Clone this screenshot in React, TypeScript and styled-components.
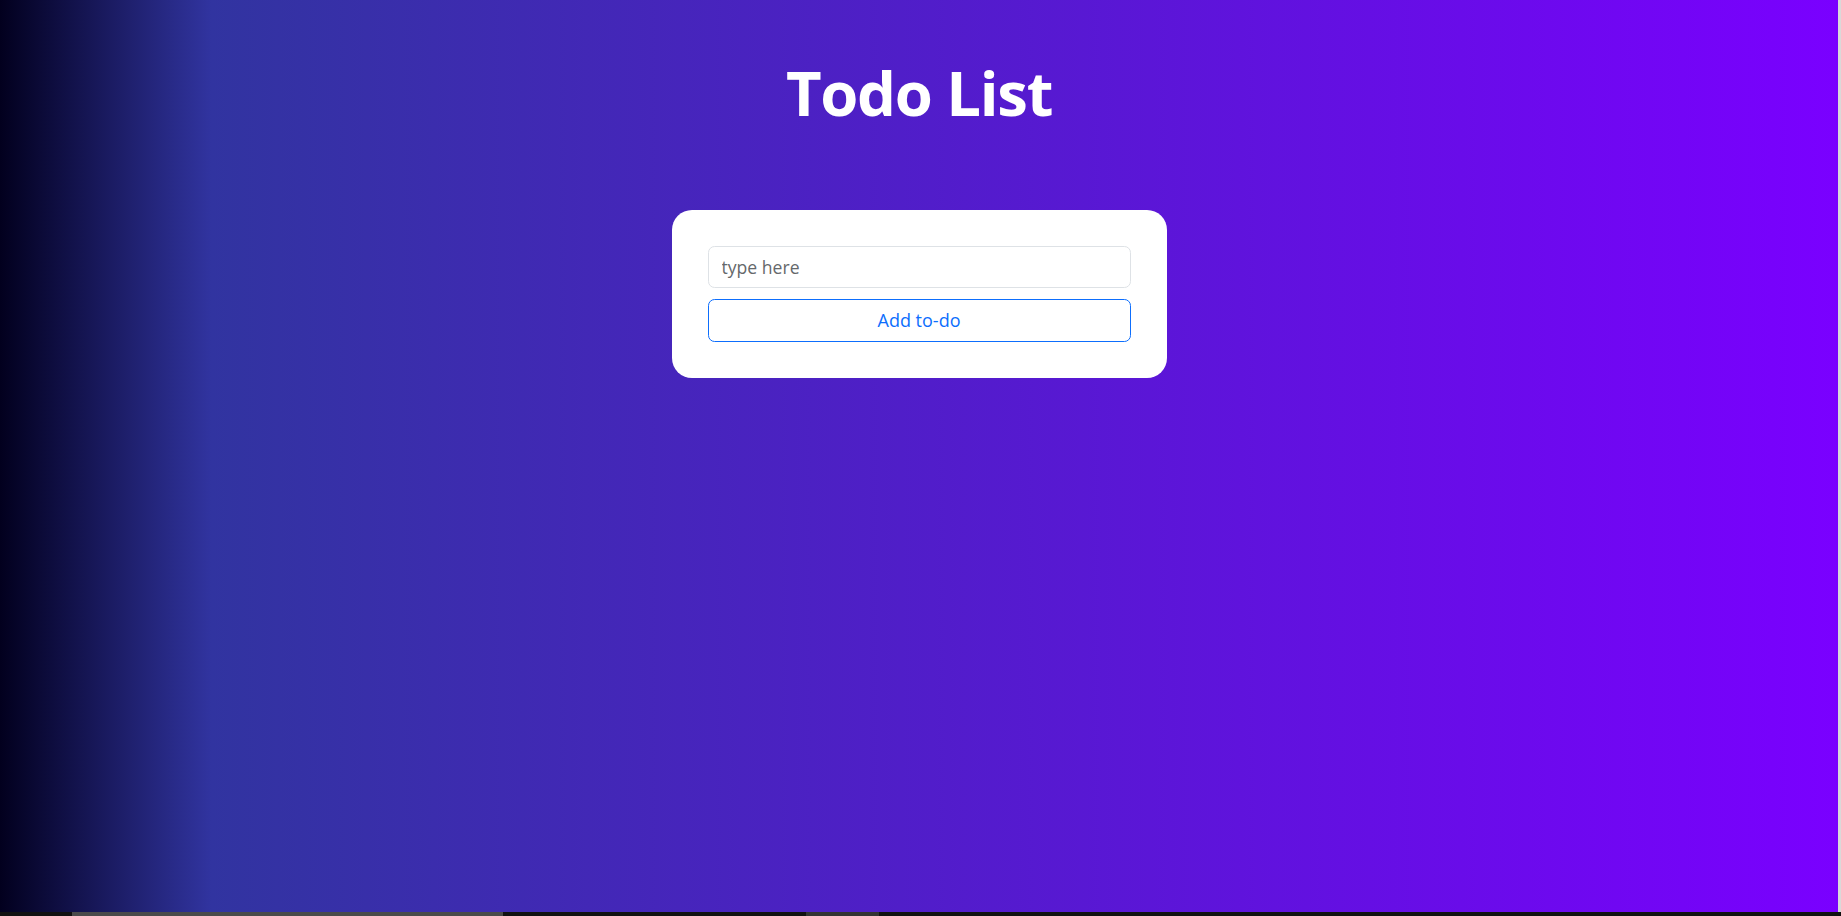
import React, { useState } from "react";
import styled, { createGlobalStyle } from "styled-components";

const Global = createGlobalStyle`
  html, body { margin: 0; padding: 0; height: 100%; overflow: hidden; }
  #root { height: 100%; }
  * { box-sizing: border-box; }
`;

const Shell = styled.div`
  display: flex;
  flex-direction: column;
  width: 1841px;
  height: 916px;
  font-family: "Open Sans", "Noto Sans", sans-serif;
`;

const Viewport = styled.div`
  display: flex;
  flex: 1;
  min-height: 0;
`;

const Page = styled.main`
  flex: 1;
  display: flex;
  flex-direction: column;
  align-items: center;
  padding-top: 56px;
  background: linear-gradient(
    90deg,
    rgb(2, 0, 30) 0%,
    rgb(49, 52, 160) 11.5%,
    rgb(122, 0, 255) 100%
  );
`;

const EdgeStrip = styled.div`
  width: 3px;
  background: #d9d9d9;
`;

const ScrollBar = styled.div`
  display: flex;
  height: 4px;
  background: #111111;
`;

const ScrollPiece = styled.div<{ $w: number; $tone: string }>`
  width: ${(p) => p.$w}px;
  flex: none;
  background: ${(p) => p.$tone};
`;

const Title = styled.h1`
  margin: 0;
  font-size: 61.6px;
  line-height: 1.2;
  font-weight: 700;
  color: #ffffff;
  letter-spacing: -1.3px;
`;

const Card = styled.section`
  margin-top: 80px;
  width: 495px;
  padding: 36px;
  background: #ffffff;
  border-radius: 20px;
  display: flex;
  flex-direction: column;
  gap: 11px;
`;

const Input = styled.input`
  height: 42px;
  width: 100%;
  padding: 0 13px;
  border: 1px solid #dee2e6;
  border-radius: 6.6px;
  font-family: inherit;
  font-size: 17.6px;
  color: #212529;
  outline: none;
  &::placeholder { color: #65686b; }
`;

const AddButton = styled.button`
  height: 43px;
  width: 100%;
  border: 1px solid #0d6efd;
  border-radius: 6.6px;
  background: #ffffff;
  color: #0d6efd;
  font-family: inherit;
  font-size: 18px;
  cursor: pointer;
`;

export default function App() {
  const [value, setValue] = useState("");
  return (
    <Shell>
      <Global />
      <Viewport>
        <Page>
          <Title>Todo List</Title>
          <Card>
            <Input
              placeholder="type here"
              value={value}
              onChange={(e) => setValue(e.target.value)}
            />
            <AddButton>Add to-do</AddButton>
          </Card>
        </Page>
        <EdgeStrip />
      </Viewport>
      <ScrollBar>
        <ScrollPiece $w={72} $tone="#111111" />
        <ScrollPiece $w={431} $tone="#4a4a4a" />
        <ScrollPiece $w={303} $tone="#111111" />
        <ScrollPiece $w={73} $tone="#333333" />
      </ScrollBar>
    </Shell>
  );
}
